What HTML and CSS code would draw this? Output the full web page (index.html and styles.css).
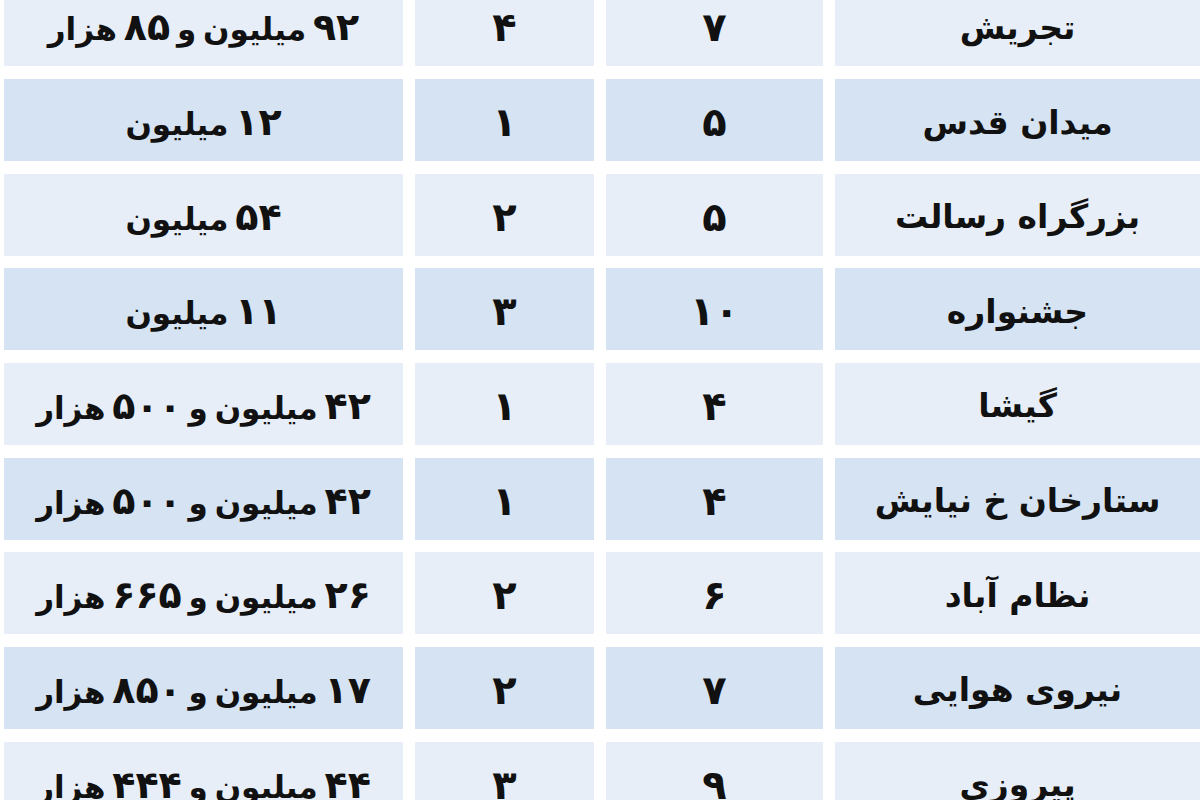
FILE: index.html
```html
<!DOCTYPE html>
<html lang="fa" dir="rtl">
<head>
<meta charset="utf-8">
<link rel="stylesheet" href="styles.css">
</head>
<body>
<div class="table">
  <div class="row light"><div class="cell">تجریش</div><div class="cell n">۷</div><div class="cell n">۴</div><div class="cell p"><span class="v"><span class="d">۹۲</span> میلیون و <span class="d">۸۵</span> هزار</span></div></div>
  <div class="row dark"><div class="cell">میدان قدس</div><div class="cell n">۵</div><div class="cell n">۱</div><div class="cell p"><span class="v"><span class="d">۱۲</span> میلیون</span></div></div>
  <div class="row light"><div class="cell">بزرگراه رسالت</div><div class="cell n">۵</div><div class="cell n">۲</div><div class="cell p"><span class="v"><span class="d">۵۴</span> میلیون</span></div></div>
  <div class="row dark"><div class="cell">جشنواره</div><div class="cell n">۱۰</div><div class="cell n">۳</div><div class="cell p"><span class="v"><span class="d">۱۱</span> میلیون</span></div></div>
  <div class="row light"><div class="cell">گیشا</div><div class="cell n">۴</div><div class="cell n">۱</div><div class="cell p"><span class="v"><span class="d">۴۲</span> میلیون و <span class="d">۵۰۰</span> هزار</span></div></div>
  <div class="row dark"><div class="cell">ستارخان خ نیایش</div><div class="cell n">۴</div><div class="cell n">۱</div><div class="cell p"><span class="v"><span class="d">۴۲</span> میلیون و <span class="d">۵۰۰</span> هزار</span></div></div>
  <div class="row light"><div class="cell">نظام آباد</div><div class="cell n">۶</div><div class="cell n">۲</div><div class="cell p"><span class="v"><span class="d">۲۶</span> میلیون و <span class="d">۶۶۵</span> هزار</span></div></div>
  <div class="row dark"><div class="cell">نیروی هوایی</div><div class="cell n">۷</div><div class="cell n">۲</div><div class="cell p"><span class="v"><span class="d">۱۷</span> میلیون و <span class="d">۸۵۰</span> هزار</span></div></div>
  <div class="row light"><div class="cell">پیروزی</div><div class="cell n">۹</div><div class="cell n">۳</div><div class="cell p"><span class="v"><span class="d">۴۴</span> میلیون و <span class="d">۴۴۴</span> هزار</span></div></div>
</div>
</body>
</html>
```
FILE: styles.css
```css
html, body {
  margin: 0;
  padding: 0;
  background: #ffffff;
  overflow: hidden;
}
body {
  width: 1200px;
  height: 800px;
  font-family: "DejaVu Sans", "Noto Sans", sans-serif;
  font-weight: bold;
  color: #111111;
}
.table {
  display: flex;
  flex-direction: column;
  gap: 12.67px;
  margin-top: -15.67px;
  padding-left: 4px;
}
.row {
  display: grid;
  grid-template-columns: 365px 217px 179px 399px;
  column-gap: 12px;
  height: 82px;
}
.cell {
  display: flex;
  align-items: center;
  justify-content: center;
  font-size: 33px;
  line-height: 1;
  white-space: nowrap;
  padding-top: 4px;
  box-sizing: border-box;
}
.cell.n {
  font-size: 40px;
}
.cell.p {
  font-size: 31px;
}
.v {
  word-spacing: -4px;
}
.d {
  font-size: 38px;
  word-spacing: 0;
}
.light .cell {
  background: #e8eef7;
}
.dark .cell {
  background: #d5e3f3;
}
```
